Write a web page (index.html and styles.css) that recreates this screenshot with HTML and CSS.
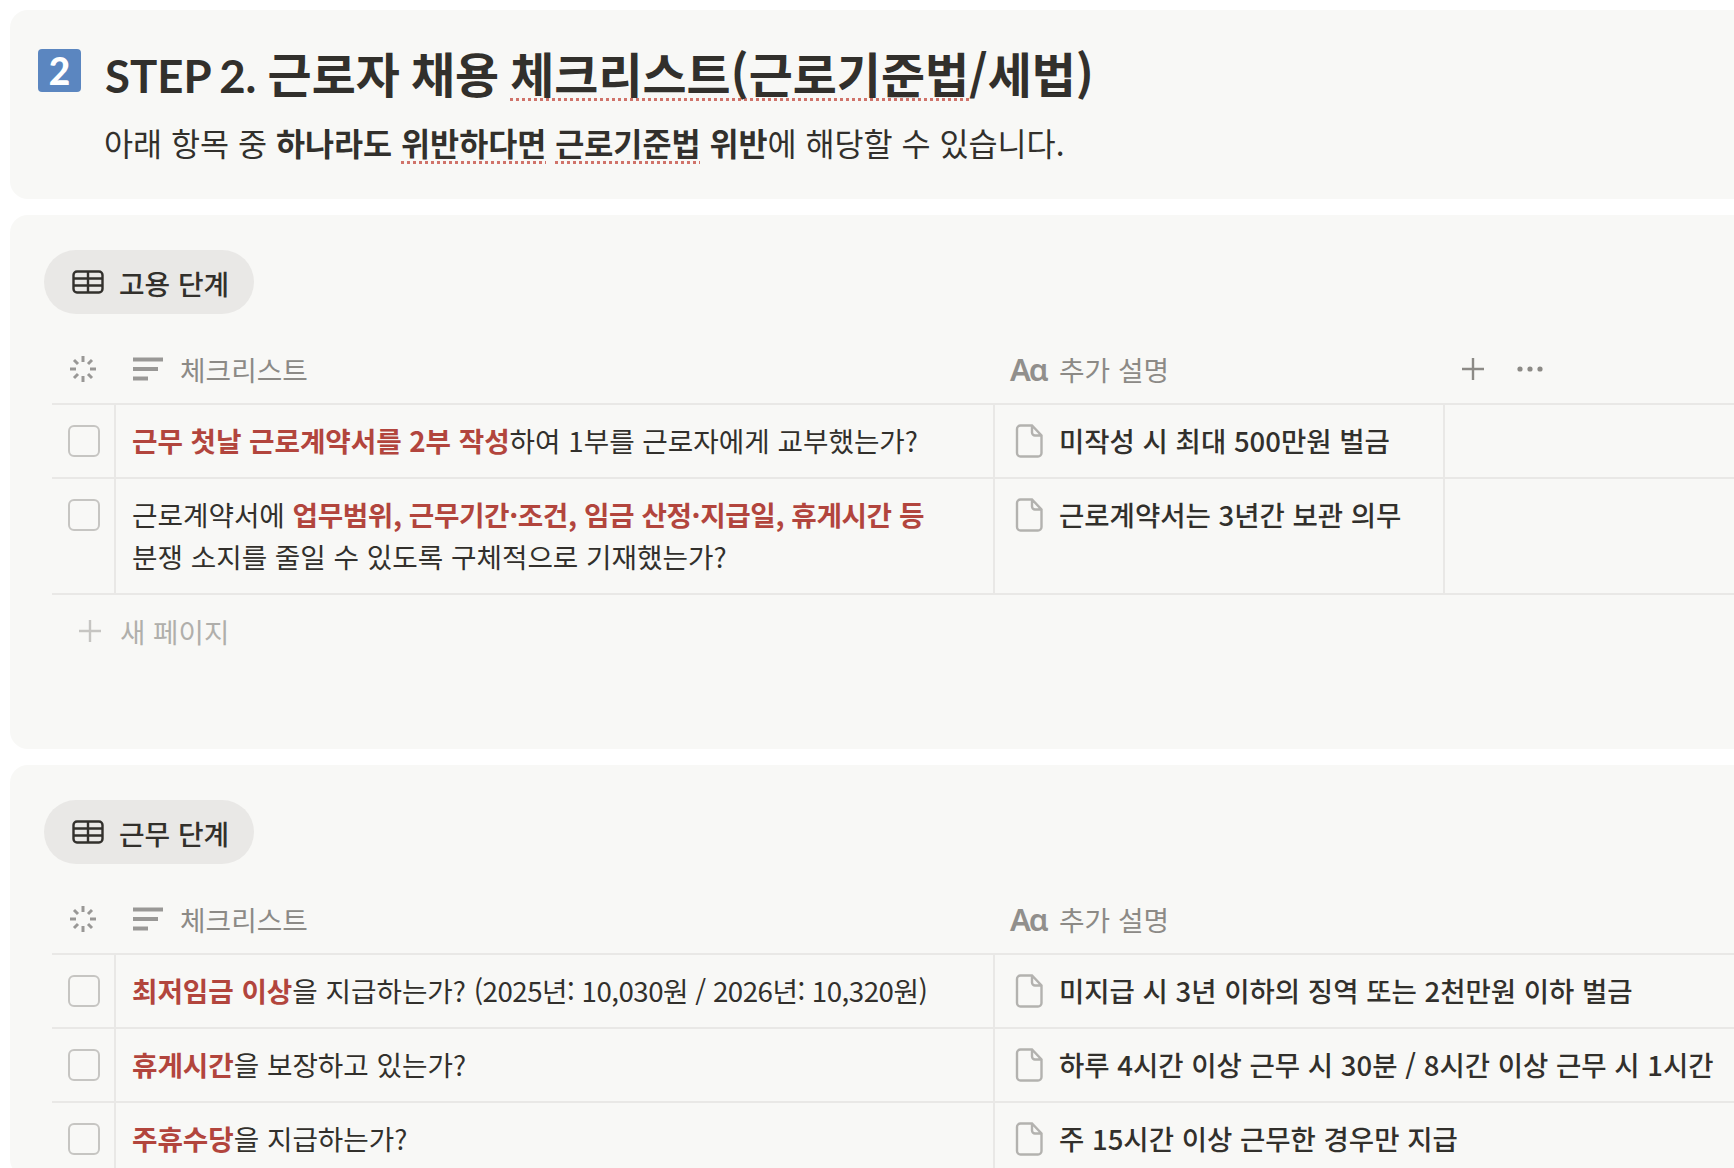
FILE: index.html
```html
<!DOCTYPE html>
<html lang="ko">
<head>
    <meta charset="UTF-8">
    <title>STEP 2. 근로자 채용 체크리스트</title>
    <link rel="stylesheet" href="styles.css">
</head>
<body>
    <svg class="sprite" width="0" height="0">
        <symbol id="i-table" viewBox="0 0 32 24"><rect x="1.500" y="1.500" width="29" height="21" rx="3.500" fill="none" stroke="currentColor" stroke-width="2.400"/><path d="M1.500 8.500h29M1.500 15.500h29M16 1.500v21" fill="none" stroke="currentColor" stroke-width="2.400"/></symbol>
        <symbol id="i-status" viewBox="0 0 28 28"><path d="M14 1v6M14 21v6M1 14h6M21 14h6M5 5l4 4M19 19l4 4M23 5l-4 4M9 19l-4 4" fill="none" stroke="currentColor" stroke-width="3"/></symbol>
        <symbol id="i-lines" viewBox="0 0 30 24"><path d="M0 2.500h30M0 12h25M0 21.500h15" fill="none" stroke="currentColor" stroke-width="3.800"/></symbol>
        <symbol id="i-doc" viewBox="0 0 28 34"><path d="M5 1.500h11.500L26 11.500V29a3.500 3.500 0 0 1-3.500 3.500H5A3.500 3.500 0 0 1 1.500 29V5A3.500 3.500 0 0 1 5 1.500zM16.500 1.500v7a3 3 0 0 0 3 3H26" fill="none" stroke="currentColor" stroke-width="2.400"/></symbol>
        <symbol id="i-plus" viewBox="0 0 22 22"><path d="M11 0v22M0 11h22" fill="none" stroke="currentColor" stroke-width="2.400"/></symbol>
        <symbol id="i-dots" viewBox="0 0 26 6"><circle cx="3" cy="3" r="2.600" fill="currentColor"/><circle cx="13" cy="3" r="2.600" fill="currentColor"/><circle cx="23" cy="3" r="2.600" fill="currentColor"/></symbol>
    </svg>

    <div class="page">
        <section class="card head-card">
            <div class="title-row">
                <span class="num-badge">2</span>
                <h1><span class="step">STEP 2.</span> 근로자 채용 <span class="spell">체크리스트(근로기준법</span>/세법)</h1>
            </div>
            <p class="sub">아래 항목 중 <b>하나라도 <span class="spell">위반하다면</span> <span class="spell">근로기준법</span> 위반</b>에 해당할 수 있습니다.</p>
        </section>

        <section class="card db-card">
            <div class="view-pill">
                <svg class="pill-icon"><use href="#i-table"/></svg>
                <span>고용 단계</span>
            </div>
            <div class="table with-extra">
                <div class="row header">
                    <div class="cell status"><svg class="status-icon"><use href="#i-status"/></svg></div>
                    <div class="cell"><svg class="lines-icon"><use href="#i-lines"/></svg>체크리스트</div>
                    <div class="cell"><span class="aa">Aɑ</span>추가 설명</div>
                    <div class="cell actions">
                        <svg class="plus-icon"><use href="#i-plus"/></svg>
                        <svg class="dots-icon"><use href="#i-dots"/></svg>
                    </div>
                </div>
                <div class="row">
                    <div class="cell check"><span class="box"></span></div>
                    <div class="cell text"><div><b class="red">근무 첫날 근로계약서를 2부 작성</b>하여 1부를 근로자에게 교부했는가?</div></div>
                    <div class="cell note"><svg class="doc-icon"><use href="#i-doc"/></svg><span>미작성 시 최대 500만원 벌금</span></div>
                    <div class="cell"></div>
                </div>
                <div class="row">
                    <div class="cell check"><span class="box"></span></div>
                    <div class="cell text"><div>근로계약서에 <b class="red list">업무범위, 근무기간·조건, 임금 산정·지급일, 휴게시간 등</b><br>분쟁 소지를 줄일 수 있도록 구체적으로 기재했는가?</div></div>
                    <div class="cell note"><svg class="doc-icon"><use href="#i-doc"/></svg><span>근로계약서는 3년간 보관 의무</span></div>
                    <div class="cell"></div>
                </div>
            </div>
            <div class="new-page">
                <svg class="plus-icon"><use href="#i-plus"/></svg>
                <span>새 페이지</span>
            </div>
        </section>

        <section class="card db-card">
            <div class="view-pill">
                <svg class="pill-icon"><use href="#i-table"/></svg>
                <span>근무 단계</span>
            </div>
            <div class="table">
                <div class="row header">
                    <div class="cell status"><svg class="status-icon"><use href="#i-status"/></svg></div>
                    <div class="cell"><svg class="lines-icon"><use href="#i-lines"/></svg>체크리스트</div>
                    <div class="cell"><span class="aa">Aɑ</span>추가 설명</div>
                </div>
                <div class="row">
                    <div class="cell check"><span class="box"></span></div>
                    <div class="cell text"><div><b class="red">최저임금 이상</b>을 지급하는가? <span class="tight">(2025년: 10,030원 / 2026년: 10,320원)</span></div></div>
                    <div class="cell note"><svg class="doc-icon"><use href="#i-doc"/></svg><span>미지급 시 3년 이하의 징역 또는 2천만원 이하 벌금</span></div>
                </div>
                <div class="row">
                    <div class="cell check"><span class="box"></span></div>
                    <div class="cell text"><div><b class="red">휴게시간</b>을 보장하고 있는가?</div></div>
                    <div class="cell note"><svg class="doc-icon"><use href="#i-doc"/></svg><span>하루 4시간 이상 근무 시 30분 / 8시간 이상 근무 시 1시간</span></div>
                </div>
                <div class="row">
                    <div class="cell check"><span class="box"></span></div>
                    <div class="cell text"><div><b class="red">주휴수당</b>을 지급하는가?</div></div>
                    <div class="cell note"><svg class="doc-icon"><use href="#i-doc"/></svg><span>주 15시간 이상 근무한 경우만 지급</span></div>
                </div>
            </div>
        </section>
    </div>
</body>
</html>
```

FILE: styles.css
```css
html, body {
    margin: 0;
    padding: 0;
    background: #fff;
    overflow: hidden;
    height: 1168px;
}
body {
    font-family: "Noto Sans CJK KR", "Noto Sans", sans-serif;
    color: #32302c;
}
.sprite {
    position: absolute;
}
.page {
    width: 1800px;
    padding: 10px 0 0 10px;
    display: flex;
    flex-direction: column;
    gap: 16px;
}
.card {
    background: #f8f8f6;
    border-radius: 18px;
}

/* heading card */
.head-card {
    height: 189px;
    box-sizing: border-box;
    padding: 39px 0 0 28px;
}
.title-row {
    display: flex;
    align-items: center;
    gap: 24px;
    height: 50px;
}
.num-badge {
    width: 43px;
    height: 43px;
    flex: none;
    margin-bottom: 8px;
    border-radius: 4px;
    background: #5b86c0;
    color: #fff;
    font-family: "Lato", sans-serif;
    font-size: 37px;
    font-weight: 900;
    line-height: 43px;
    text-align: center;
}
h1 {
    margin: 0;
    font-size: 47.900px;
    font-weight: 700;
    line-height: 50px;
    word-spacing: -2.200px;
    white-space: nowrap;
}
.step {
    font-family: "Lato", sans-serif;
    font-size: 45.500px;
    font-weight: 700;
}
.sub {
    margin: 22px 0 0 66px;
    font-size: 31.600px;
    line-height: 42px;
    white-space: nowrap;
}
.spell {
    text-decoration: underline dotted #d0736a 3px;
    text-underline-offset: 5px;
    text-decoration-skip-ink: none;
}

/* database cards */
.db-card {
    padding: 35px 0 0 34px;
}
.db-card:nth-child(2) {
    height: 499px;
}
.view-pill {
    width: 210px;
    height: 64px;
    border-radius: 32px;
    background: #e9e8e6;
    display: flex;
    align-items: center;
    gap: 15px;
    padding: 2px 0 0 28px;
    box-sizing: border-box;
    font-size: 27.800px;
    font-weight: 500;
}
.pill-icon {
    width: 32px;
    height: 24px;
    flex: none;
    margin-top: -2px;
}
.table {
    margin: 24px 0 0 8px;
}
.row {
    display: grid;
    grid-template-columns: 64px 879px 1fr;
    border-bottom: 2px solid #e9e8e6;
}
.with-extra .row {
    grid-template-columns: 64px 879px 450px 1fr;
}
.cell {
    border-right: 2px solid #e9e8e6;
    box-sizing: border-box;
    min-width: 0;
}
.row > .cell:last-child {
    border-right: none;
}
.header {
    height: 65px;
    color: #8c8a86;
    font-size: 27.800px;
}
.header .cell {
    border-right: none;
    display: flex;
    align-items: center;
    padding: 0 0 4px 17px;
}
.header .cell:nth-child(3) {
    padding-left: 15px;
}
.status-icon {
    width: 28px;
    height: 28px;
    color: #999896;
}
.lines-icon {
    width: 30px;
    height: 24px;
    flex: none;
    color: #999896;
    margin-right: 17px;
}
.aa {
    font-family: "Noto Sans", sans-serif;
    font-size: 31px;
    font-weight: 600;
    color: #918f8c;
    letter-spacing: -2px;
    width: 49px;
    flex: none;
}
.actions {
    gap: 33px;
}
.actions .plus-icon {
    width: 22px;
    height: 22px;
}
.dots-icon {
    width: 26px;
    height: 6px;
}
.text {
    padding: 14px 14px 16px 16px;
    font-size: 27.700px;
    line-height: 42px;
    white-space: nowrap;
}
.tight {
    letter-spacing: -0.500px;
}
.red {
    color: #b2453d;
    font-weight: 700;
    letter-spacing: -0.050px;
}
.red.list {
    letter-spacing: -0.400px;
}
.check {
    padding: 20px 0 0 16px;
}
.box {
    display: block;
    width: 32px;
    height: 32px;
    box-sizing: border-box;
    border: 2px solid #c6c5c2;
    border-radius: 6px;
}
.note {
    display: flex;
    align-items: flex-start;
    padding: 14px 0 0 20px;
    gap: 15px;
    font-size: 27.500px;
    font-weight: 500;
    line-height: 42px;
    white-space: nowrap;
}
.doc-icon {
    width: 29px;
    height: 34px;
    margin-top: 5px;
    flex: none;
    color: #b3b2af;
}
.new-page {
    display: flex;
    align-items: center;
    height: 72px;
    padding-left: 35px;
    gap: 19px;
    color: #b0afab;
    font-size: 27.600px;
}
.new-page .plus-icon {
    width: 22px;
    height: 22px;
    color: #c6c5c2;
}
```
